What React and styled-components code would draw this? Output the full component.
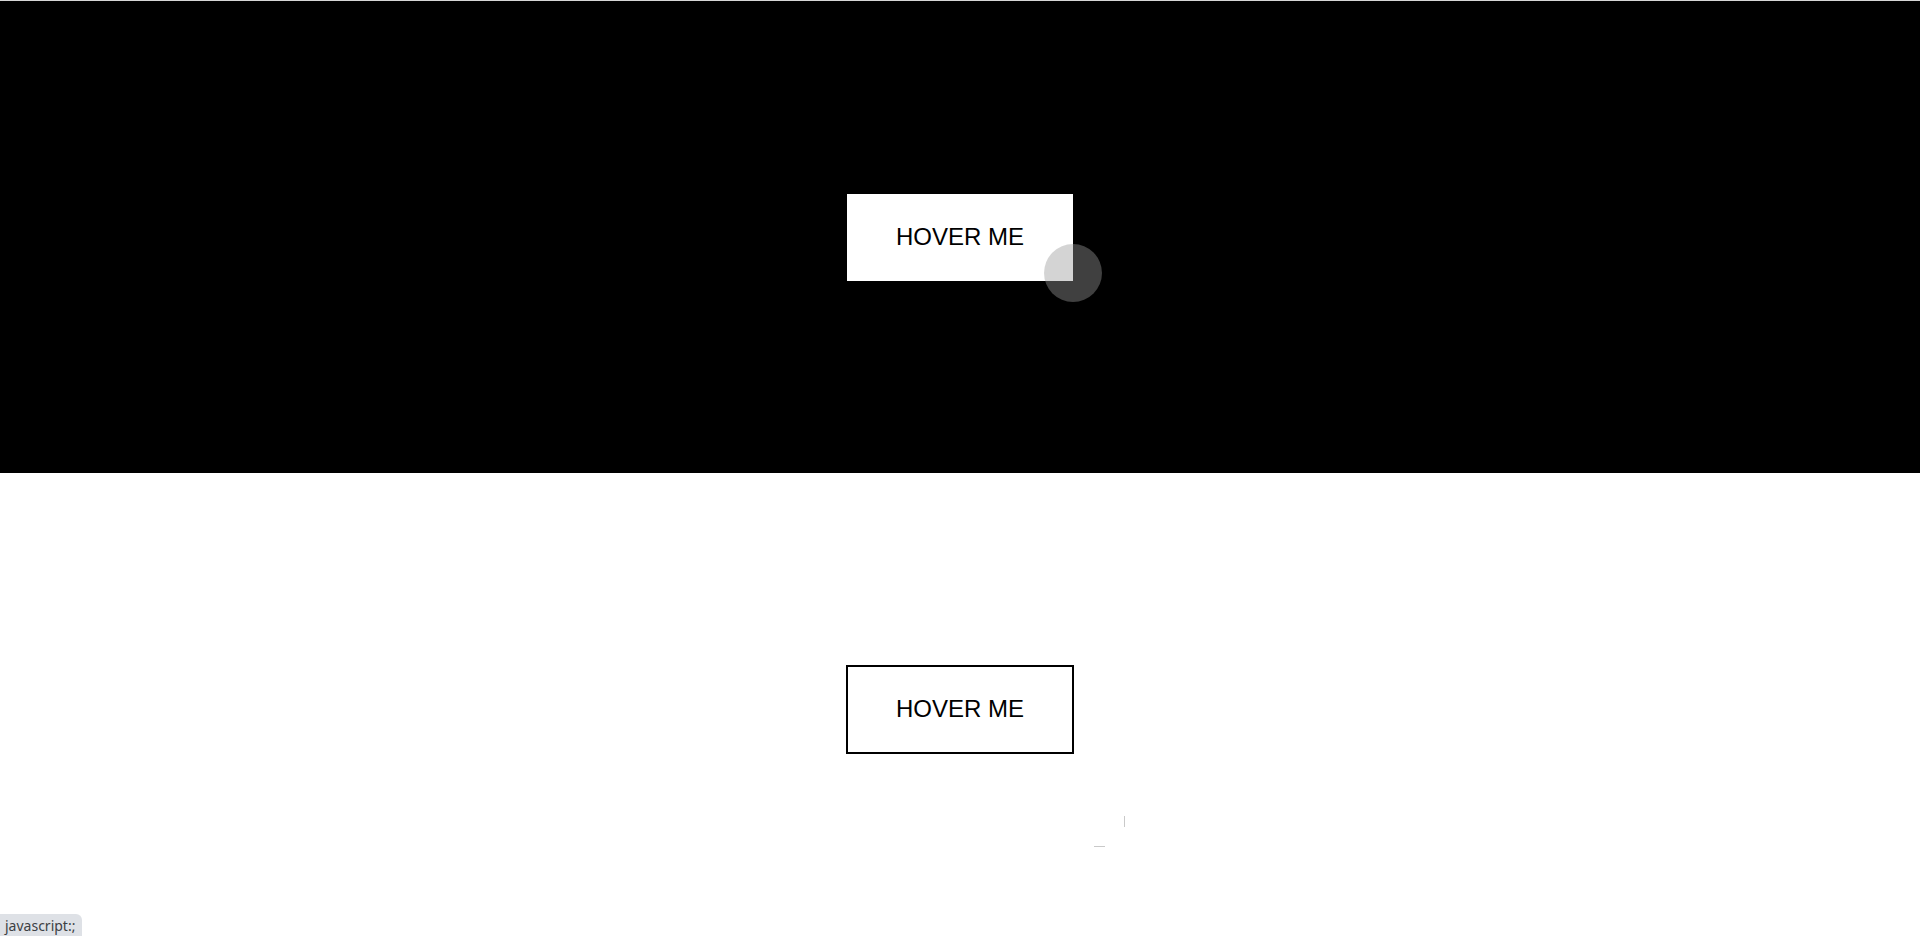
import React from "react";
import styled, { createGlobalStyle } from "styled-components";

const Global = createGlobalStyle`
  html, body { margin: 0; padding: 0; background: #fff; overflow: hidden; }
  body { font-family: "Liberation Sans", Arial, sans-serif; }
`;

const Page = styled.div`
  position: relative;
  width: 1920px;
  height: 936px;
  overflow: hidden;
  border-top: 1px solid #d6d6d6;
  box-sizing: border-box;
`;

const Section = styled.section`
  position: relative;
  height: 472px;
  display: flex;
  align-items: center;
  justify-content: center;
  background: ${(p) => (p.$dark ? "#000" : "#fff")};
`;

const HoverButton = styled.a`
  box-sizing: border-box;
  width: 228px;
  height: 89px;
  display: flex;
  align-items: center;
  justify-content: center;
  text-decoration: none;
  font-family: "Liberation Sans", Arial, sans-serif;
  font-size: 24px;
  color: #000;
  background: #fff;
  border: ${(p) => (p.$dark ? "1px solid #000" : "2px solid #000")};
  cursor: pointer;
`;

const CursorDot = styled.div`
  position: absolute;
  left: 1044px;
  top: 243px;
  width: 58px;
  height: 58px;
  border-radius: 50%;
  background: rgba(153, 153, 153, 0.42);
  pointer-events: none;
`;

const CursorRing = styled.svg`
  position: absolute;
  left: 1063px;
  top: 312px;
  width: 64px;
  height: 64px;
  pointer-events: none;
`;

const StatusBar = styled.div`
  position: absolute;
  left: 0;
  bottom: 0;
  height: 22px;
  padding: 0 7px 0 5px;
  display: flex;
  align-items: center;
  background: #dee1e6;
  border-top-right-radius: 6px;
  font-family: "Noto Sans", "Open Sans", sans-serif;
  font-size: 14px;
  color: #3c4043;
`;

export default function App() {
  return (
    <>
      <Global />
      <Page>
        <Section $dark>
          <HoverButton $dark href="javascript:;">HOVER ME</HoverButton>
          <CursorDot />
        </Section>
        <Section>
          <HoverButton href="javascript:;">HOVER ME</HoverButton>
          <CursorRing viewBox="0 0 64 64">
            <line x1="61.5" y1="31" x2="61.5" y2="42" stroke="#c9c9c9" strokeWidth="1" />
            <line x1="31" y1="61.5" x2="42" y2="61.5" stroke="#c9c9c9" strokeWidth="1" />
          </CursorRing>
        </Section>
        <StatusBar>javascript:;</StatusBar>
      </Page>
    </>
  );
}
